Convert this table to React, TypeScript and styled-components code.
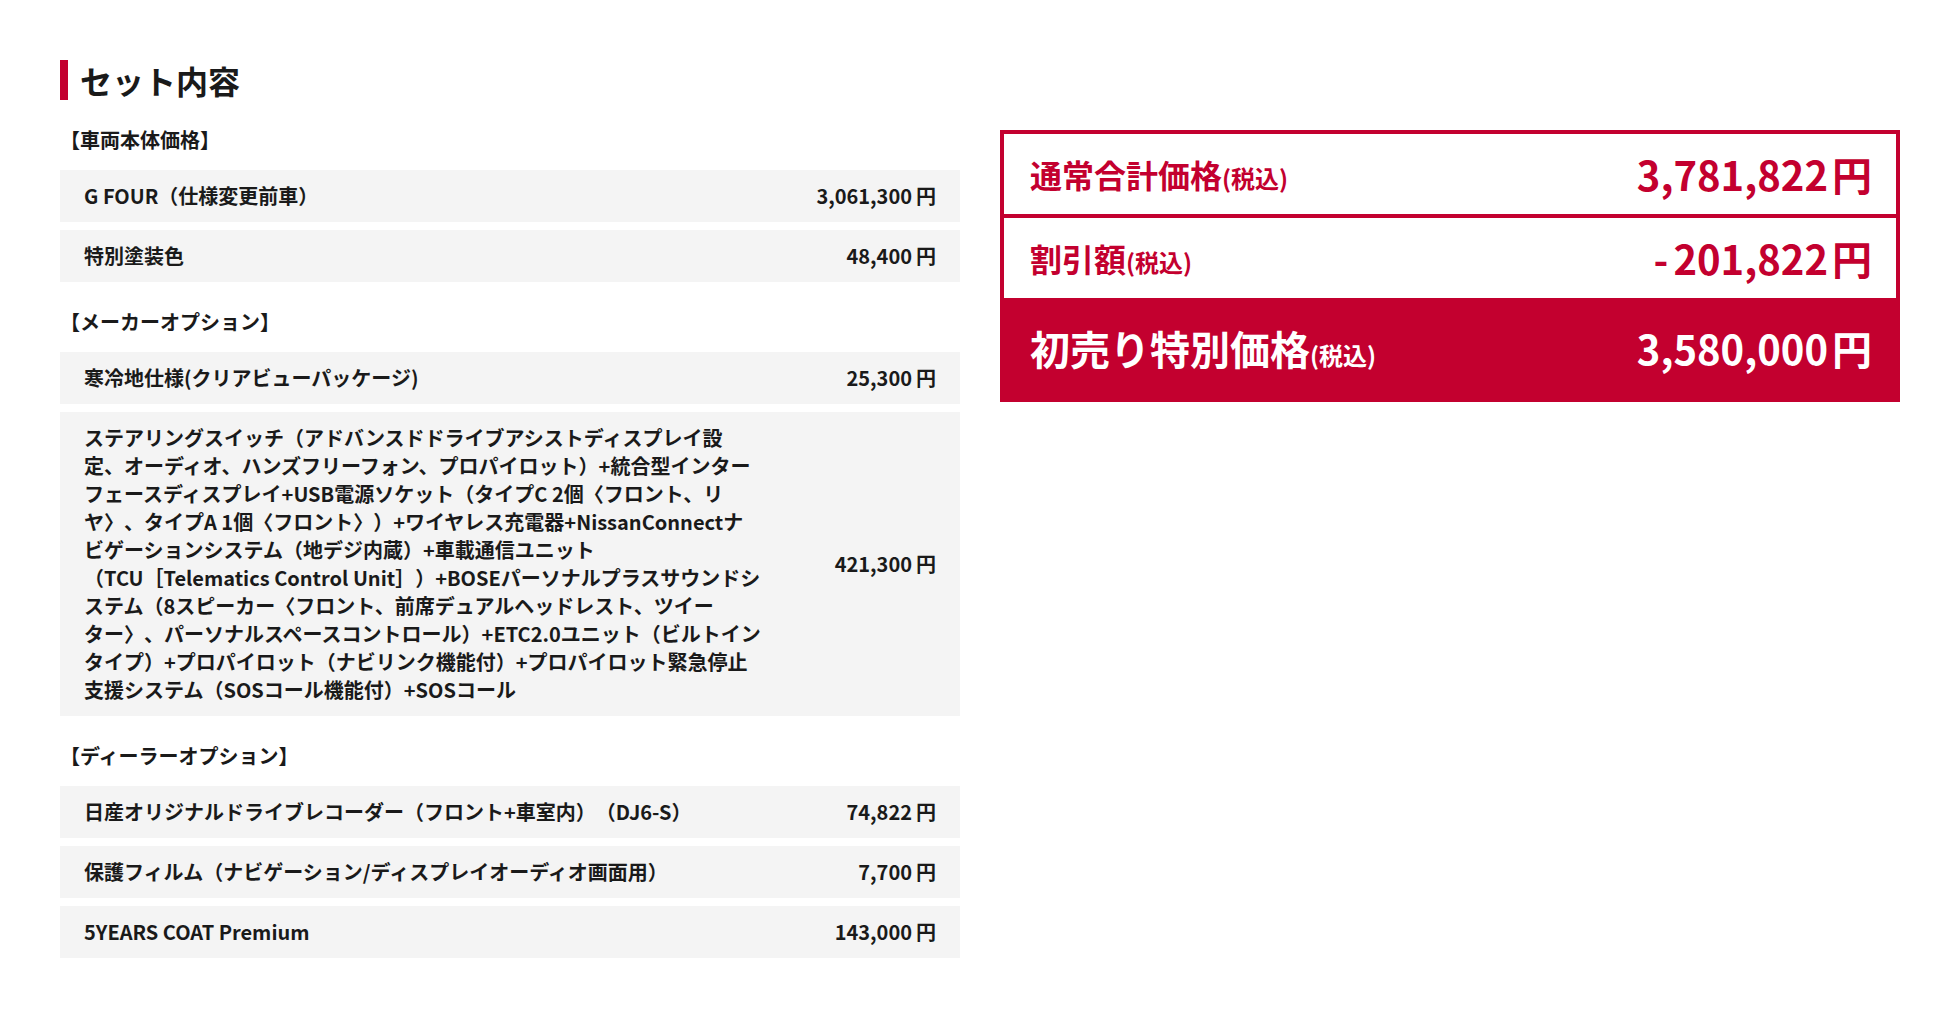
import React from "react";
import styled, { createGlobalStyle } from "styled-components";

const RED = "#c3002f";

const GlobalStyle = createGlobalStyle`
  html, body {
    margin: 0;
    padding: 0;
    background: #ffffff;
  }
  body {
    font-family: "Noto Sans CJK JP", "Noto Sans", sans-serif;
    color: #1a1a1a;
    text-spacing-trim: space-all;
  }
  * { box-sizing: border-box; }
`;

const Page = styled.div`
  padding: 60px 60px 60px 60px;
  width: 1960px;
`;

const Heading = styled.h2`
  margin: 0 0 26px 0;
  height: 40px;
  display: flex;
  align-items: center;
  border-left: 8px solid ${RED};
  padding-left: 12px;
  font-size: 32px;
  line-height: 40px;
  font-weight: 700;
  color: #1a1a1a;
`;

const Layout = styled.div`
  display: grid;
  grid-template-columns: 900px 900px;
  column-gap: 40px;
  align-items: start;
`;

const ItemsColumn = styled.div`
  display: flex;
  flex-direction: column;
`;

const GroupLabel = styled.div<{ $first?: boolean }>`
  margin: ${(p) => (p.$first ? "0" : "26px")} 0 16px 0;
  font-size: 20px;
  line-height: 28px;
  font-weight: 700;
`;

const ItemList = styled.div`
  display: flex;
  flex-direction: column;
  gap: 8px;
`;

const ItemRow = styled.div`
  display: flex;
  align-items: center;
  justify-content: space-between;
  background: #f4f4f4;
  padding: 12px 24px;
  font-size: 20px;
  line-height: 28px;
  font-weight: 700;
`;

const ItemName = styled.div`
  flex: 1 1 auto;
`;

const NameLine = styled.span`
  display: block;
  white-space: nowrap;
`;

const ItemPrice = styled.div`
  flex: 0 0 auto;
  white-space: nowrap;
  margin-left: 24px;
`;

const Yen = styled.span<{ $gap?: number }>`
  margin-left: ${(p) => p.$gap ?? 4}px;
`;

const Minus = styled.span`
  margin-right: 5px;
`;

const SummaryPanel = styled.div`
  margin-top: 4px;
  border: 4px solid ${RED};
  display: flex;
  flex-direction: column;
`;

const SummaryRow = styled.div<{ $highlight?: boolean; $divider?: boolean }>`
  display: flex;
  align-items: center;
  justify-content: space-between;
  padding: 0 24px 0 26px;
  height: ${(p) => (p.$highlight ? "100px" : p.$divider ? "84px" : "80px")};
  background: ${(p) => (p.$highlight ? RED : "#ffffff")};
  color: ${(p) => (p.$highlight ? "#ffffff" : RED)};
  border-bottom: ${(p) => (p.$divider ? `4px solid ${RED}` : "none")};
  font-weight: 700;
`;

const SummaryLabel = styled.div<{ $large?: boolean }>`
  font-size: ${(p) => (p.$large ? "40px" : "32px")};
  line-height: 1;
  white-space: nowrap;
`;

const TaxNote = styled.span`
  font-size: 24px;
`;

const SummaryPrice = styled.div`
  font-size: 40px;
  line-height: 1;
  white-space: nowrap;
`;

type Item = { name: string | string[]; price: string };

const groups: { label: string; items: Item[] }[] = [
  {
    label: "【車両本体価格】",
    items: [
      { name: "G FOUR（仕様変更前車）", price: "3,061,300" },
      { name: "特別塗装色", price: "48,400" },
    ],
  },
  {
    label: "【メーカーオプション】",
    items: [
      { name: "寒冷地仕様(クリアビューパッケージ)", price: "25,300" },
      {
        name: [
          "ステアリングスイッチ（アドバンスドドライブアシストディスプレイ設",
          "定、オーディオ、ハンズフリーフォン、プロパイロット）+統合型インター",
          "フェースディスプレイ+USB電源ソケット（タイプC 2個〈フロント、リ",
          "ヤ〉、タイプA 1個〈フロント〉）+ワイヤレス充電器+NissanConnectナ",
          "ビゲーションシステム（地デジ内蔵）+車載通信ユニット",
          "（TCU［Telematics Control Unit］）+BOSEパーソナルプラスサウンドシ",
          "ステム（8スピーカー〈フロント、前席デュアルヘッドレスト、ツイー",
          "ター〉、パーソナルスペースコントロール）+ETC2.0ユニット（ビルトイン",
          "タイプ）+プロパイロット（ナビリンク機能付）+プロパイロット緊急停止",
          "支援システム（SOSコール機能付）+SOSコール",
        ],
        price: "421,300",
      },
    ],
  },
  {
    label: "【ディーラーオプション】",
    items: [
      { name: "日産オリジナルドライブレコーダー（フロント+車室内）（DJ6-S）", price: "74,822" },
      { name: "保護フィルム（ナビゲーション/ディスプレイオーディオ画面用）", price: "7,700" },
      { name: "5YEARS COAT Premium", price: "143,000" },
    ],
  },
];

export default function App() {
  return (
    <>
      <GlobalStyle />
      <Page>
        <Heading>セット内容</Heading>
        <Layout>
          <ItemsColumn>
            {groups.map((g, gi) => (
              <React.Fragment key={g.label}>
                <GroupLabel $first={gi === 0}>{g.label}</GroupLabel>
                <ItemList>
                  {g.items.map((it, ii) => (
                    <ItemRow key={ii}>
                      <ItemName>
                        {Array.isArray(it.name)
                          ? it.name.map((l, li) => <NameLine key={li}>{l}</NameLine>)
                          : it.name}
                      </ItemName>
                      <ItemPrice>
                        {it.price}
                        <Yen>円</Yen>
                      </ItemPrice>
                    </ItemRow>
                  ))}
                </ItemList>
              </React.Fragment>
            ))}
          </ItemsColumn>
          <SummaryPanel>
            <SummaryRow $divider>
              <SummaryLabel>
                通常合計価格<TaxNote>(税込)</TaxNote>
              </SummaryLabel>
              <SummaryPrice>
                3,781,822<Yen>円</Yen>
              </SummaryPrice>
            </SummaryRow>
            <SummaryRow>
              <SummaryLabel>
                割引額<TaxNote>(税込)</TaxNote>
              </SummaryLabel>
              <SummaryPrice>
                <Minus>-</Minus>201,822<Yen>円</Yen>
              </SummaryPrice>
            </SummaryRow>
            <SummaryRow $highlight>
              <SummaryLabel $large>
                初売り特別価格<TaxNote>(税込)</TaxNote>
              </SummaryLabel>
              <SummaryPrice>
                3,580,000<Yen>円</Yen>
              </SummaryPrice>
            </SummaryRow>
          </SummaryPanel>
        </Layout>
      </Page>
    </>
  );
}
